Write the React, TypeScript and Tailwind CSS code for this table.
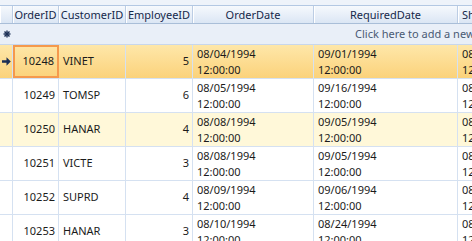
const COLS = [
  { key: "ind", label: "", w: "w-[13px]" },
  { key: "OrderID", label: "OrderID", w: "w-[46px]" },
  { key: "CustomerID", label: "CustomerID", w: "w-[67px]" },
  { key: "EmployeeID", label: "EmployeeID", w: "w-[67px]" },
  { key: "OrderDate", label: "OrderDate", w: "w-[121px]" },
  { key: "RequiredDate", label: "RequiredDate", w: "w-[144px]" },
  { key: "ShippedDate", label: "ShippedDate", w: "w-[120px]" },
];

const ROWS = [
  { id: 10248, cust: "VINET", emp: 5, od: "08/04/1994", rd: "09/01/1994", sd: "08/16/1994" },
  { id: 10249, cust: "TOMSP", emp: 6, od: "08/05/1994", rd: "09/16/1994", sd: "08/10/1994" },
  { id: 10250, cust: "HANAR", emp: 4, od: "08/08/1994", rd: "09/05/1994", sd: "08/12/1994" },
  { id: 10251, cust: "VICTE", emp: 3, od: "08/08/1994", rd: "09/05/1994", sd: "08/15/1994" },
  { id: 10252, cust: "SUPRD", emp: 4, od: "08/09/1994", rd: "09/06/1994", sd: "08/11/1994" },
  { id: 10253, cust: "HANAR", emp: 3, od: "08/10/1994", rd: "08/24/1994", sd: "08/16/1994" },
];

// row 0 is current, row 2 is under the mouse
const HOVER = 2;

function DateCell({ date, w }: { date: string; w: string }) {
  return (
    <div className={`${w} shrink-0 border-r border-[#d5e1f1] pl-[4px] flex flex-col justify-center leading-[16px] whitespace-nowrap`}>
      <span>{date}</span>
      <span>12:00:00</span>
    </div>
  );
}

export default function App() {
  return (
    <div
      className="w-[472px] h-[241px] overflow-hidden bg-white text-[11px] text-[#1b1b1b]"
      style={{ fontFamily: '"Segoe UI", "Noto Sans", "Open Sans", sans-serif' }}
    >
      <div className="h-[6px] bg-[#eef3fa] border-b border-[#b3c8e3]" />
      {/* header */}
      <div className="flex h-[18px] border-b border-[#a9bed8] bg-gradient-to-b from-[#f6f9fd] to-[#dbe6f4] text-[#15284a]">
        {COLS.map((c) => (
          <div
            key={c.key}
            className={`${c.w} shrink-0 border-r border-[#bccde4] shadow-[inset_1px_0_0_#ffffff] flex items-center ${
              c.key === "ShippedDate" ? "pl-[4px]" : "justify-center"
            } leading-none whitespace-nowrap overflow-hidden`}
          >
            {c.label}
          </div>
        ))}
      </div>
      {/* new row */}
      <div className="flex h-[21px] border-b border-[#c8d7ec] bg-[#e9eff8] items-center">
        <div className="w-[13px] shrink-0 flex items-center justify-center">
          <svg width="8" height="8" viewBox="0 0 8 8">
            <g stroke="#1c2f55" strokeWidth="1.4">
              <line x1="4" y1="0.5" x2="4" y2="7.5" />
              <line x1="0.5" y1="4" x2="7.5" y2="4" />
              <line x1="1.5" y1="1.5" x2="6.5" y2="6.5" />
              <line x1="6.5" y1="1.5" x2="1.5" y2="6.5" />
            </g>
          </svg>
        </div>
        <span className="pl-[342px] whitespace-nowrap text-[#4a5a74]">Click here to add a new row</span>
      </div>
      {/* rows */}
      {ROWS.map((r, i) => {
        const selected = i === 0;
        const bg = selected
          ? "bg-gradient-to-b from-[#fee7a9] to-[#fbd27a]"
          : i === HOVER
          ? "bg-[#fff8d9]"
          : "bg-white";
        return (
          <div key={r.id} className={`flex h-[34px] border-b border-[#d5e1f1] ${bg}`}>
            <div className="w-[13px] shrink-0 border-r border-[#d5e1f1] flex items-center justify-center">
              {selected && (
                <svg width="9" height="9" viewBox="0 0 8 8">
                  <path d="M0 2.8h4V0.3L7.8 4 4 7.7V5.2H0z" fill="#1c2f55" />
                </svg>
              )}
            </div>
            <div
              className={`w-[46px] shrink-0 flex items-center justify-end pr-[3px] ${
                selected ? "border-2 border-[#f5994d]" : "border-r border-[#d5e1f1]"
              }`}
            >
              {r.id}
            </div>
            <div className="w-[67px] shrink-0 border-r border-[#d5e1f1] flex items-center pl-[4px]">{r.cust}</div>
            <div className="w-[67px] shrink-0 border-r border-[#d5e1f1] flex items-center justify-end pr-[3px]">{r.emp}</div>
            <DateCell date={r.od} w="w-[121px]" />
            <DateCell date={r.rd} w="w-[144px]" />
            <DateCell date={r.sd} w="w-[120px]" />
          </div>
        );
      })}
    </div>
  );
}
